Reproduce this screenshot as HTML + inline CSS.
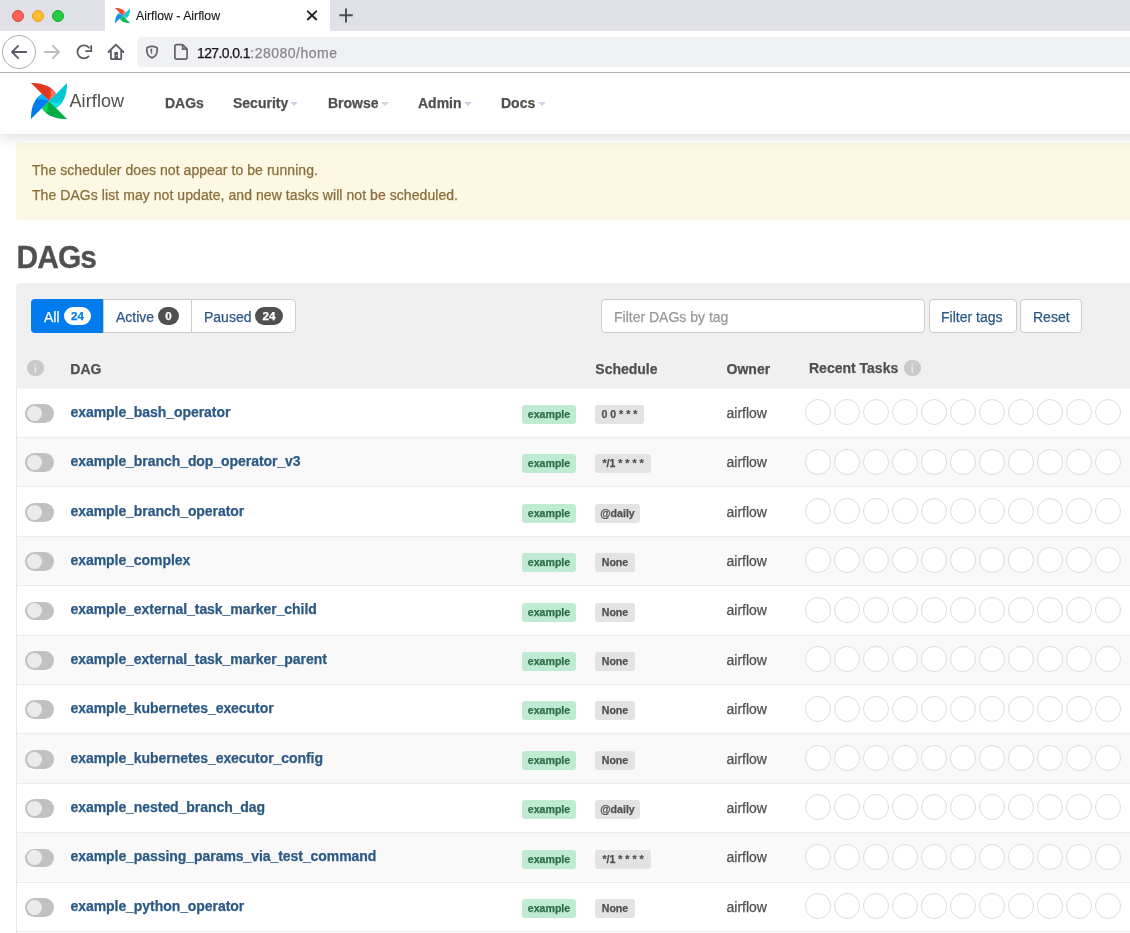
<!DOCTYPE html><html><head><meta charset="utf-8"><style>
*{box-sizing:border-box}
html,body{margin:0;padding:0}
body{will-change:transform;width:1130px;height:933px;overflow:hidden;position:relative;background:#fff;font-family:"Liberation Sans",sans-serif;font-size:14px;color:#51504f}
.a{position:absolute;white-space:nowrap;-webkit-text-stroke:0.25px currentColor}
.tabbar{left:0;top:0;width:1130px;height:31px;background:#dfe1e6}
.tab{left:105px;top:0;width:225px;height:31px;background:#fff}
.tl{width:12px;height:12px;border-radius:50%}
.toolbar{left:0;top:31px;width:1130px;height:41px;background:#fff}
.tbline{left:0;top:72px;width:1130px;height:1px;background:#b3b3b3}
.url{left:137px;top:37px;width:1000px;height:30px;background:#f0f1f4;border-radius:5px}
.nav{left:0;top:73px;width:1200px;height:61px;background:#fff;box-shadow:0 3px 14px rgba(0,0,0,0.15);clip-path:inset(0 -30px -30px -30px);z-index:5}
.navlink{font-weight:bold;font-size:14px;color:#51504f;line-height:16px}
.caret{width:0;height:0;border-top:4px solid #dccbe4;border-left:4px solid transparent;border-right:4px solid transparent}
.alert{left:16px;top:143px;width:1130px;height:77px;background:#fcf8e3;border-radius:4px;color:#8a6d3b;z-index:3}
.panel{left:16px;top:283px;width:1130px;height:104.5px;background:#f0f0f0;border-top-left-radius:4px}
.btn{height:33.5px;background:#fff;border:1px solid #ccc;color:#2c5985;font-size:14px;line-height:31px}
.badge{display:inline-block;border-radius:9px;font-weight:bold;font-size:11.6px;line-height:18px;height:18px;text-align:center}
.th{font-weight:bold;color:#51504f;line-height:16px}
.info{width:16.5px;height:16.5px;border-radius:50%;background:#c9c9c9}
.row{left:16px;width:1130px;border-top:1px solid #ececec}
.tog{width:28.7px;height:18.8px;border-radius:9.4px;background:#c2c1bf}
.knob{left:1.7px;top:1.8px;width:15px;height:15px;border-radius:50%;background:#ebebeb}
.dag{font-weight:bold;color:#2c5985;line-height:16px;letter-spacing:-0.06px}
.tag{height:19px;border-radius:3px;background:#c0ebd3;color:#2f6e47;font-weight:bold;font-size:10.6px;line-height:19px;text-align:center}
.sch{height:19px;border-radius:3px;background:#e3e3e3;color:#51504f;font-weight:bold;font-size:10.6px;line-height:19px;text-align:center}
.owner{line-height:16px;color:#51504f}
.circ{width:26px;height:26px;border-radius:50%;border:1px solid #dcdcdc;background:#fff}
</style></head><body><div class="a tabbar"></div>
<div class="a tab"></div>
<div class="a tl" style="left:12px;top:10px;background:#fe5f57;border:0.5px solid #e14640"></div>
<div class="a tl" style="left:32px;top:10px;background:#febc2e;border:0.5px solid #dfa023"></div>
<div class="a tl" style="left:52px;top:10px;background:#28c840;border:0.5px solid #1aab29"></div>
<div class="a" style="left:114.5px;top:8.3px;width:15.3px;height:15.3px;opacity:0.9"><svg width="15.3" height="15.3" viewBox="0 0 36 36">
<path d="M0 0 C10 -0.3 21 3 25 11 L18 18 Z" fill="#E43921"/>
<path d="M19.2 6.7 C20.5 9.5 19.5 14.5 18 18 L25 11 C23.8 8.8 21.8 7.3 19.2 6.7 Z" fill="#FF7557"/>
<g transform="rotate(90 18 18)">
<path d="M0 0 C10 -0.3 21 3 25 11 L18 18 Z" fill="#00C7D4"/>
<path d="M19.2 6.7 C20.5 9.5 19.5 14.5 18 18 L25 11 C23.8 8.8 21.8 7.3 19.2 6.7 Z" fill="#11E1EE"/>
</g>
<g transform="rotate(180 18 18)">
<path d="M0 0 C10 -0.3 21 3 25 11 L18 18 Z" fill="#00AD46"/>
<path d="M19.2 6.7 C20.5 9.5 19.5 14.5 18 18 L25 11 C23.8 8.8 21.8 7.3 19.2 6.7 Z" fill="#04D659"/>
</g>
<g transform="rotate(270 18 18)">
<path d="M0 0 C10 -0.3 21 3 25 11 L18 18 Z" fill="#017CEE"/>
<path d="M19.2 6.7 C20.5 9.5 19.5 14.5 18 18 L25 11 C23.8 8.8 21.8 7.3 19.2 6.7 Z" fill="#0CB6FF"/>
</g>
</svg></div>
<div class="a" style="left:136px;top:8.9px;font-size:12.3px;-webkit-text-stroke:0.1px;line-height:15px;color:#15141a">Airflow - Airflow</div>
<svg class="a" style="left:306px;top:10.3px" width="12" height="11" viewBox="0 0 12 11"><path d="M1.7 1.3 L10.3 9.5 M10.3 1.3 L1.7 9.5" stroke="#1c1b22" stroke-width="1.8" stroke-linecap="round"/></svg>
<svg class="a" style="left:338px;top:6.5px" width="16" height="16" viewBox="0 0 16 16"><path d="M8 1.6 V15.6 M1.3 8.3 H14.8" stroke="#4a4d55" stroke-width="1.9"/></svg>
<div class="a toolbar"></div>
<div class="a" style="left:2px;top:35px;width:34px;height:34px;border-radius:50%;border:1px solid #ababae"></div>
<svg class="a" style="left:9px;top:43px" width="20" height="18" viewBox="0 0 20 18"><path d="M17.3 9 H3 M9.2 2.9 L3 9 L9.2 15.1" stroke="#5b5b66" stroke-width="1.8" fill="none" stroke-linecap="round" stroke-linejoin="round"/></svg>
<svg class="a" style="left:42px;top:43px" width="20" height="18" viewBox="0 0 20 18"><path d="M2.6 9 H17 M10.8 2.9 L17 9 L10.8 15.1" stroke="#bcbcc1" stroke-width="1.8" fill="none" stroke-linecap="round" stroke-linejoin="round"/></svg>
<svg class="a" style="left:75px;top:43px" width="20" height="18" viewBox="0 0 20 18"><path d="M13.6 13.4 A6.5 6.5 0 1 1 13.9 4.6" stroke="#5b5b66" stroke-width="1.8" fill="none" stroke-linecap="round"/><path d="M16.2 2.2 V8.1 H10.4" stroke="#5b5b66" stroke-width="1.8" fill="none" stroke-linejoin="miter"/></svg>
<svg class="a" style="left:107px;top:43px" width="18" height="18" viewBox="0 0 18 18"><path d="M1.5 9 L8.9 1.6 L16.4 9 M3.9 7.5 V15.4 Q3.9 16.2 4.7 16.2 H13.4 Q14.2 16.2 14.2 15.4 V7.5" stroke="#5b5b66" stroke-width="1.8" fill="none" stroke-linecap="round" stroke-linejoin="round"/><rect x="7.4" y="9" width="3.6" height="7.2" fill="#5b5b66"/><circle cx="9.6" cy="12.6" r="0.6" fill="#fff"/></svg>
<div class="a url"></div>
<svg class="a" style="left:144px;top:44px" width="16" height="16" viewBox="0 0 16 16"><path d="M2.9 3.7 Q8 1.2 13.1 3.7 V7 Q13.1 11.8 8 13.9 Q2.9 11.8 2.9 7 Z" stroke="#646466" stroke-width="1.7" fill="none" stroke-linejoin="round"/><path d="M6.2 5 L8.1 4.5 L8.1 10.9 Q6.5 8.6 6.2 5 Z" fill="#646466"/></svg>
<svg class="a" style="left:172px;top:43px" width="18" height="18" viewBox="0 0 18 18"><path d="M2.9 3.6 Q2.9 1.7 4.8 1.7 H10.6 L15.1 6.2 V14.2 Q15.1 16.1 13.2 16.1 H4.8 Q2.9 16.1 2.9 14.2 Z M10.6 1.7 V6.2 H15.1" stroke="#646466" stroke-width="1.7" fill="none" stroke-linejoin="round"/></svg>
<div class="a" style="left:197px;top:45px;font-size:14px;line-height:16px;color:#15141a;letter-spacing:-0.62px">127.0.0.1</div>
<div class="a" style="left:250.3px;top:45px;font-size:14px;line-height:16px;color:#86868c;letter-spacing:0.5px">:28080/home</div>
<div class="a tbline"></div>
<div class="a nav"></div>
<div class="a" style="left:31px;top:83px;width:36px;height:36px;z-index:6"><svg width="36" height="36" viewBox="0 0 36 36">
<path d="M0 0 C10 -0.3 21 3 25 11 L18 18 Z" fill="#E43921"/>
<path d="M19.2 6.7 C20.5 9.5 19.5 14.5 18 18 L25 11 C23.8 8.8 21.8 7.3 19.2 6.7 Z" fill="#FF7557"/>
<g transform="rotate(90 18 18)">
<path d="M0 0 C10 -0.3 21 3 25 11 L18 18 Z" fill="#00C7D4"/>
<path d="M19.2 6.7 C20.5 9.5 19.5 14.5 18 18 L25 11 C23.8 8.8 21.8 7.3 19.2 6.7 Z" fill="#11E1EE"/>
</g>
<g transform="rotate(180 18 18)">
<path d="M0 0 C10 -0.3 21 3 25 11 L18 18 Z" fill="#00AD46"/>
<path d="M19.2 6.7 C20.5 9.5 19.5 14.5 18 18 L25 11 C23.8 8.8 21.8 7.3 19.2 6.7 Z" fill="#04D659"/>
</g>
<g transform="rotate(270 18 18)">
<path d="M0 0 C10 -0.3 21 3 25 11 L18 18 Z" fill="#017CEE"/>
<path d="M19.2 6.7 C20.5 9.5 19.5 14.5 18 18 L25 11 C23.8 8.8 21.8 7.3 19.2 6.7 Z" fill="#0CB6FF"/>
</g>
</svg></div>
<div class="a" style="left:69.5px;top:92px;font-size:18px;line-height:18px;color:#51504f;z-index:6;-webkit-text-stroke:0;letter-spacing:0.1px">Airflow</div>
<div class="a navlink" style="left:165px;top:95px;z-index:6">DAGs</div>
<div class="a navlink" style="left:233px;top:95px;z-index:6">Security</div>
<div class="a navlink" style="left:328px;top:95px;z-index:6">Browse</div>
<div class="a navlink" style="left:418px;top:95px;z-index:6">Admin</div>
<div class="a navlink" style="left:501px;top:95px;z-index:6">Docs</div>
<div class="a caret" style="left:290px;top:102px;z-index:6"></div>
<div class="a caret" style="left:381px;top:102px;z-index:6"></div>
<div class="a caret" style="left:464px;top:102px;z-index:6"></div>
<div class="a caret" style="left:538px;top:102px;z-index:6"></div>
<div class="a alert"></div>
<div class="a" style="left:32px;top:162px;color:#8a6d3b;line-height:16px;z-index:4;letter-spacing:0.06px">The scheduler does not appear to be running.</div>
<div class="a" style="left:32px;top:187px;color:#8a6d3b;line-height:16px;z-index:4;letter-spacing:0.065px">The DAGs list may not update, and new tasks will not be scheduled.</div>
<div class="a" style="left:16.6px;top:240px;font-size:30px;font-weight:bold;line-height:34px;color:#51504f;letter-spacing:-1px;transform:scaleY(1.03);transform-origin:0 0">DAGs</div>
<div class="a panel"></div>
<div class="a" style="left:31px;top:299px;width:72.5px;height:33.5px;background:#017cee;border-radius:4px 0 0 4px"></div>
<div class="a" style="left:44px;top:309px;color:#fff;line-height:16px">All</div>
<div class="a badge" style="left:64px;top:307px;width:27px;background:#fff;color:#017cee">24</div>
<div class="a btn" style="left:103px;top:299px;width:89px;border-right:0"></div>
<div class="a" style="left:116px;top:309px;color:#2c5985;line-height:16px">Active</div>
<div class="a badge" style="left:158px;top:307px;width:21px;background:#51504f;color:#fff">0</div>
<div class="a btn" style="left:191px;top:299px;width:105px;border-radius:0 4px 4px 0"></div>
<div class="a" style="left:204px;top:309px;color:#2c5985;line-height:16px">Paused</div>
<div class="a badge" style="left:255px;top:307px;width:28px;background:#51504f;color:#fff">24</div>
<div class="a" style="left:601px;top:299px;width:324px;height:33.5px;background:#fff;border:1px solid #ccc;border-radius:4px"></div>
<div class="a" style="left:614px;top:309px;color:#999;line-height:16px">Filter DAGs by tag</div>
<div class="a btn" style="left:929px;top:299px;width:88px;border-radius:4px"></div>
<div class="a" style="left:941px;top:309px;color:#2c5985;line-height:16px">Filter tags</div>
<div class="a btn" style="left:1020px;top:299px;width:62px;border-radius:4px"></div>
<div class="a" style="left:1033px;top:309px;color:#2c5985;line-height:16px">Reset</div>
<div class="a info" style="left:27px;top:359.5px"></div>
<svg class="a" style="left:27px;top:359.5px" width="16.5" height="16.5" viewBox="0 0 16 16"><circle cx="8" cy="4.7" r="0.9" fill="#ececec"/><rect x="7.3" y="6.7" width="1.4" height="5.6" fill="#ececec"/></svg>
<div class="a th" style="left:70.3px;top:360.8px">DAG</div>
<div class="a th" style="left:595.3px;top:361.2px">Schedule</div>
<div class="a th" style="left:726.6px;top:361.2px">Owner</div>
<div class="a th" style="left:809px;top:360.2px">Recent Tasks</div>
<div class="a info" style="left:904px;top:359.6px"></div>
<svg class="a" style="left:904px;top:359.6px" width="16.5" height="16.5" viewBox="0 0 16 16"><circle cx="8" cy="4.7" r="0.9" fill="#ececec"/><rect x="7.3" y="6.7" width="1.4" height="5.6" fill="#ececec"/></svg>
<div class="a row" style="top:930.90px;height:10px;background:#fff"></div>
<div class="a row" style="top:387.50px;height:49.40px;background:#fff;border-top-color:#f7f7f7"></div>
<div class="a tog" style="left:25.2px;top:404.00px"><div class="a knob"></div></div>
<div class="a dag" style="left:70.5px;top:403.80px">example_bash_operator</div>
<div class="a tag" style="left:522px;top:405.00px;width:54px">example</div>
<div class="a sch" style="left:595px;top:405.00px;width:48.8px">0 0 * * *</div>
<div class="a owner" style="left:726.5px;top:404.70px">airflow</div>
<div class="a circ" style="left:804.5px;top:399.10px"></div>
<div class="a circ" style="left:833.5px;top:399.10px"></div>
<div class="a circ" style="left:862.5px;top:399.10px"></div>
<div class="a circ" style="left:891.5px;top:399.10px"></div>
<div class="a circ" style="left:920.5px;top:399.10px"></div>
<div class="a circ" style="left:949.5px;top:399.10px"></div>
<div class="a circ" style="left:978.5px;top:399.10px"></div>
<div class="a circ" style="left:1007.5px;top:399.10px"></div>
<div class="a circ" style="left:1036.5px;top:399.10px"></div>
<div class="a circ" style="left:1065.5px;top:399.10px"></div>
<div class="a circ" style="left:1094.5px;top:399.10px"></div>
<div class="a row" style="top:436.90px;height:49.40px;background:#f9f9f9"></div>
<div class="a tog" style="left:25.2px;top:453.40px"><div class="a knob"></div></div>
<div class="a dag" style="left:70.5px;top:453.20px">example_branch_dop_operator_v3</div>
<div class="a tag" style="left:522px;top:454.40px;width:54px">example</div>
<div class="a sch" style="left:595px;top:454.40px;width:56px">*/1 * * * *</div>
<div class="a owner" style="left:726.5px;top:454.10px">airflow</div>
<div class="a circ" style="left:804.5px;top:448.50px"></div>
<div class="a circ" style="left:833.5px;top:448.50px"></div>
<div class="a circ" style="left:862.5px;top:448.50px"></div>
<div class="a circ" style="left:891.5px;top:448.50px"></div>
<div class="a circ" style="left:920.5px;top:448.50px"></div>
<div class="a circ" style="left:949.5px;top:448.50px"></div>
<div class="a circ" style="left:978.5px;top:448.50px"></div>
<div class="a circ" style="left:1007.5px;top:448.50px"></div>
<div class="a circ" style="left:1036.5px;top:448.50px"></div>
<div class="a circ" style="left:1065.5px;top:448.50px"></div>
<div class="a circ" style="left:1094.5px;top:448.50px"></div>
<div class="a row" style="top:486.30px;height:49.40px;background:#fff"></div>
<div class="a tog" style="left:25.2px;top:502.80px"><div class="a knob"></div></div>
<div class="a dag" style="left:70.5px;top:502.60px">example_branch_operator</div>
<div class="a tag" style="left:522px;top:503.80px;width:54px">example</div>
<div class="a sch" style="left:595px;top:503.80px;width:45px">@daily</div>
<div class="a owner" style="left:726.5px;top:503.50px">airflow</div>
<div class="a circ" style="left:804.5px;top:497.90px"></div>
<div class="a circ" style="left:833.5px;top:497.90px"></div>
<div class="a circ" style="left:862.5px;top:497.90px"></div>
<div class="a circ" style="left:891.5px;top:497.90px"></div>
<div class="a circ" style="left:920.5px;top:497.90px"></div>
<div class="a circ" style="left:949.5px;top:497.90px"></div>
<div class="a circ" style="left:978.5px;top:497.90px"></div>
<div class="a circ" style="left:1007.5px;top:497.90px"></div>
<div class="a circ" style="left:1036.5px;top:497.90px"></div>
<div class="a circ" style="left:1065.5px;top:497.90px"></div>
<div class="a circ" style="left:1094.5px;top:497.90px"></div>
<div class="a row" style="top:535.70px;height:49.40px;background:#f9f9f9"></div>
<div class="a tog" style="left:25.2px;top:552.20px"><div class="a knob"></div></div>
<div class="a dag" style="left:70.5px;top:552.00px">example_complex</div>
<div class="a tag" style="left:522px;top:553.20px;width:54px">example</div>
<div class="a sch" style="left:595px;top:553.20px;width:40px">None</div>
<div class="a owner" style="left:726.5px;top:552.90px">airflow</div>
<div class="a circ" style="left:804.5px;top:547.30px"></div>
<div class="a circ" style="left:833.5px;top:547.30px"></div>
<div class="a circ" style="left:862.5px;top:547.30px"></div>
<div class="a circ" style="left:891.5px;top:547.30px"></div>
<div class="a circ" style="left:920.5px;top:547.30px"></div>
<div class="a circ" style="left:949.5px;top:547.30px"></div>
<div class="a circ" style="left:978.5px;top:547.30px"></div>
<div class="a circ" style="left:1007.5px;top:547.30px"></div>
<div class="a circ" style="left:1036.5px;top:547.30px"></div>
<div class="a circ" style="left:1065.5px;top:547.30px"></div>
<div class="a circ" style="left:1094.5px;top:547.30px"></div>
<div class="a row" style="top:585.10px;height:49.40px;background:#fff"></div>
<div class="a tog" style="left:25.2px;top:601.60px"><div class="a knob"></div></div>
<div class="a dag" style="left:70.5px;top:601.40px">example_external_task_marker_child</div>
<div class="a tag" style="left:522px;top:602.60px;width:54px">example</div>
<div class="a sch" style="left:595px;top:602.60px;width:40px">None</div>
<div class="a owner" style="left:726.5px;top:602.30px">airflow</div>
<div class="a circ" style="left:804.5px;top:596.70px"></div>
<div class="a circ" style="left:833.5px;top:596.70px"></div>
<div class="a circ" style="left:862.5px;top:596.70px"></div>
<div class="a circ" style="left:891.5px;top:596.70px"></div>
<div class="a circ" style="left:920.5px;top:596.70px"></div>
<div class="a circ" style="left:949.5px;top:596.70px"></div>
<div class="a circ" style="left:978.5px;top:596.70px"></div>
<div class="a circ" style="left:1007.5px;top:596.70px"></div>
<div class="a circ" style="left:1036.5px;top:596.70px"></div>
<div class="a circ" style="left:1065.5px;top:596.70px"></div>
<div class="a circ" style="left:1094.5px;top:596.70px"></div>
<div class="a row" style="top:634.50px;height:49.40px;background:#f9f9f9"></div>
<div class="a tog" style="left:25.2px;top:651.00px"><div class="a knob"></div></div>
<div class="a dag" style="left:70.5px;top:650.80px">example_external_task_marker_parent</div>
<div class="a tag" style="left:522px;top:652.00px;width:54px">example</div>
<div class="a sch" style="left:595px;top:652.00px;width:40px">None</div>
<div class="a owner" style="left:726.5px;top:651.70px">airflow</div>
<div class="a circ" style="left:804.5px;top:646.10px"></div>
<div class="a circ" style="left:833.5px;top:646.10px"></div>
<div class="a circ" style="left:862.5px;top:646.10px"></div>
<div class="a circ" style="left:891.5px;top:646.10px"></div>
<div class="a circ" style="left:920.5px;top:646.10px"></div>
<div class="a circ" style="left:949.5px;top:646.10px"></div>
<div class="a circ" style="left:978.5px;top:646.10px"></div>
<div class="a circ" style="left:1007.5px;top:646.10px"></div>
<div class="a circ" style="left:1036.5px;top:646.10px"></div>
<div class="a circ" style="left:1065.5px;top:646.10px"></div>
<div class="a circ" style="left:1094.5px;top:646.10px"></div>
<div class="a row" style="top:683.90px;height:49.40px;background:#fff"></div>
<div class="a tog" style="left:25.2px;top:700.40px"><div class="a knob"></div></div>
<div class="a dag" style="left:70.5px;top:700.20px">example_kubernetes_executor</div>
<div class="a tag" style="left:522px;top:701.40px;width:54px">example</div>
<div class="a sch" style="left:595px;top:701.40px;width:40px">None</div>
<div class="a owner" style="left:726.5px;top:701.10px">airflow</div>
<div class="a circ" style="left:804.5px;top:695.50px"></div>
<div class="a circ" style="left:833.5px;top:695.50px"></div>
<div class="a circ" style="left:862.5px;top:695.50px"></div>
<div class="a circ" style="left:891.5px;top:695.50px"></div>
<div class="a circ" style="left:920.5px;top:695.50px"></div>
<div class="a circ" style="left:949.5px;top:695.50px"></div>
<div class="a circ" style="left:978.5px;top:695.50px"></div>
<div class="a circ" style="left:1007.5px;top:695.50px"></div>
<div class="a circ" style="left:1036.5px;top:695.50px"></div>
<div class="a circ" style="left:1065.5px;top:695.50px"></div>
<div class="a circ" style="left:1094.5px;top:695.50px"></div>
<div class="a row" style="top:733.30px;height:49.40px;background:#f9f9f9"></div>
<div class="a tog" style="left:25.2px;top:749.80px"><div class="a knob"></div></div>
<div class="a dag" style="left:70.5px;top:749.60px">example_kubernetes_executor_config</div>
<div class="a tag" style="left:522px;top:750.80px;width:54px">example</div>
<div class="a sch" style="left:595px;top:750.80px;width:40px">None</div>
<div class="a owner" style="left:726.5px;top:750.50px">airflow</div>
<div class="a circ" style="left:804.5px;top:744.90px"></div>
<div class="a circ" style="left:833.5px;top:744.90px"></div>
<div class="a circ" style="left:862.5px;top:744.90px"></div>
<div class="a circ" style="left:891.5px;top:744.90px"></div>
<div class="a circ" style="left:920.5px;top:744.90px"></div>
<div class="a circ" style="left:949.5px;top:744.90px"></div>
<div class="a circ" style="left:978.5px;top:744.90px"></div>
<div class="a circ" style="left:1007.5px;top:744.90px"></div>
<div class="a circ" style="left:1036.5px;top:744.90px"></div>
<div class="a circ" style="left:1065.5px;top:744.90px"></div>
<div class="a circ" style="left:1094.5px;top:744.90px"></div>
<div class="a row" style="top:782.70px;height:49.40px;background:#fff"></div>
<div class="a tog" style="left:25.2px;top:799.20px"><div class="a knob"></div></div>
<div class="a dag" style="left:70.5px;top:799.00px">example_nested_branch_dag</div>
<div class="a tag" style="left:522px;top:800.20px;width:54px">example</div>
<div class="a sch" style="left:595px;top:800.20px;width:45px">@daily</div>
<div class="a owner" style="left:726.5px;top:799.90px">airflow</div>
<div class="a circ" style="left:804.5px;top:794.30px"></div>
<div class="a circ" style="left:833.5px;top:794.30px"></div>
<div class="a circ" style="left:862.5px;top:794.30px"></div>
<div class="a circ" style="left:891.5px;top:794.30px"></div>
<div class="a circ" style="left:920.5px;top:794.30px"></div>
<div class="a circ" style="left:949.5px;top:794.30px"></div>
<div class="a circ" style="left:978.5px;top:794.30px"></div>
<div class="a circ" style="left:1007.5px;top:794.30px"></div>
<div class="a circ" style="left:1036.5px;top:794.30px"></div>
<div class="a circ" style="left:1065.5px;top:794.30px"></div>
<div class="a circ" style="left:1094.5px;top:794.30px"></div>
<div class="a row" style="top:832.10px;height:49.40px;background:#f9f9f9"></div>
<div class="a tog" style="left:25.2px;top:848.60px"><div class="a knob"></div></div>
<div class="a dag" style="left:70.5px;top:848.40px">example_passing_params_via_test_command</div>
<div class="a tag" style="left:522px;top:849.60px;width:54px">example</div>
<div class="a sch" style="left:595px;top:849.60px;width:56px">*/1 * * * *</div>
<div class="a owner" style="left:726.5px;top:849.30px">airflow</div>
<div class="a circ" style="left:804.5px;top:843.70px"></div>
<div class="a circ" style="left:833.5px;top:843.70px"></div>
<div class="a circ" style="left:862.5px;top:843.70px"></div>
<div class="a circ" style="left:891.5px;top:843.70px"></div>
<div class="a circ" style="left:920.5px;top:843.70px"></div>
<div class="a circ" style="left:949.5px;top:843.70px"></div>
<div class="a circ" style="left:978.5px;top:843.70px"></div>
<div class="a circ" style="left:1007.5px;top:843.70px"></div>
<div class="a circ" style="left:1036.5px;top:843.70px"></div>
<div class="a circ" style="left:1065.5px;top:843.70px"></div>
<div class="a circ" style="left:1094.5px;top:843.70px"></div>
<div class="a row" style="top:881.50px;height:49.40px;background:#fff"></div>
<div class="a tog" style="left:25.2px;top:898.00px"><div class="a knob"></div></div>
<div class="a dag" style="left:70.5px;top:897.80px">example_python_operator</div>
<div class="a tag" style="left:522px;top:899.00px;width:54px">example</div>
<div class="a sch" style="left:595px;top:899.00px;width:40px">None</div>
<div class="a owner" style="left:726.5px;top:898.70px">airflow</div>
<div class="a circ" style="left:804.5px;top:893.10px"></div>
<div class="a circ" style="left:833.5px;top:893.10px"></div>
<div class="a circ" style="left:862.5px;top:893.10px"></div>
<div class="a circ" style="left:891.5px;top:893.10px"></div>
<div class="a circ" style="left:920.5px;top:893.10px"></div>
<div class="a circ" style="left:949.5px;top:893.10px"></div>
<div class="a circ" style="left:978.5px;top:893.10px"></div>
<div class="a circ" style="left:1007.5px;top:893.10px"></div>
<div class="a circ" style="left:1036.5px;top:893.10px"></div>
<div class="a circ" style="left:1065.5px;top:893.10px"></div>
<div class="a circ" style="left:1094.5px;top:893.10px"></div>
<div class="a" style="left:16px;top:387.5px;width:1px;height:546px;background:#e8e8e8"></div></body></html>
